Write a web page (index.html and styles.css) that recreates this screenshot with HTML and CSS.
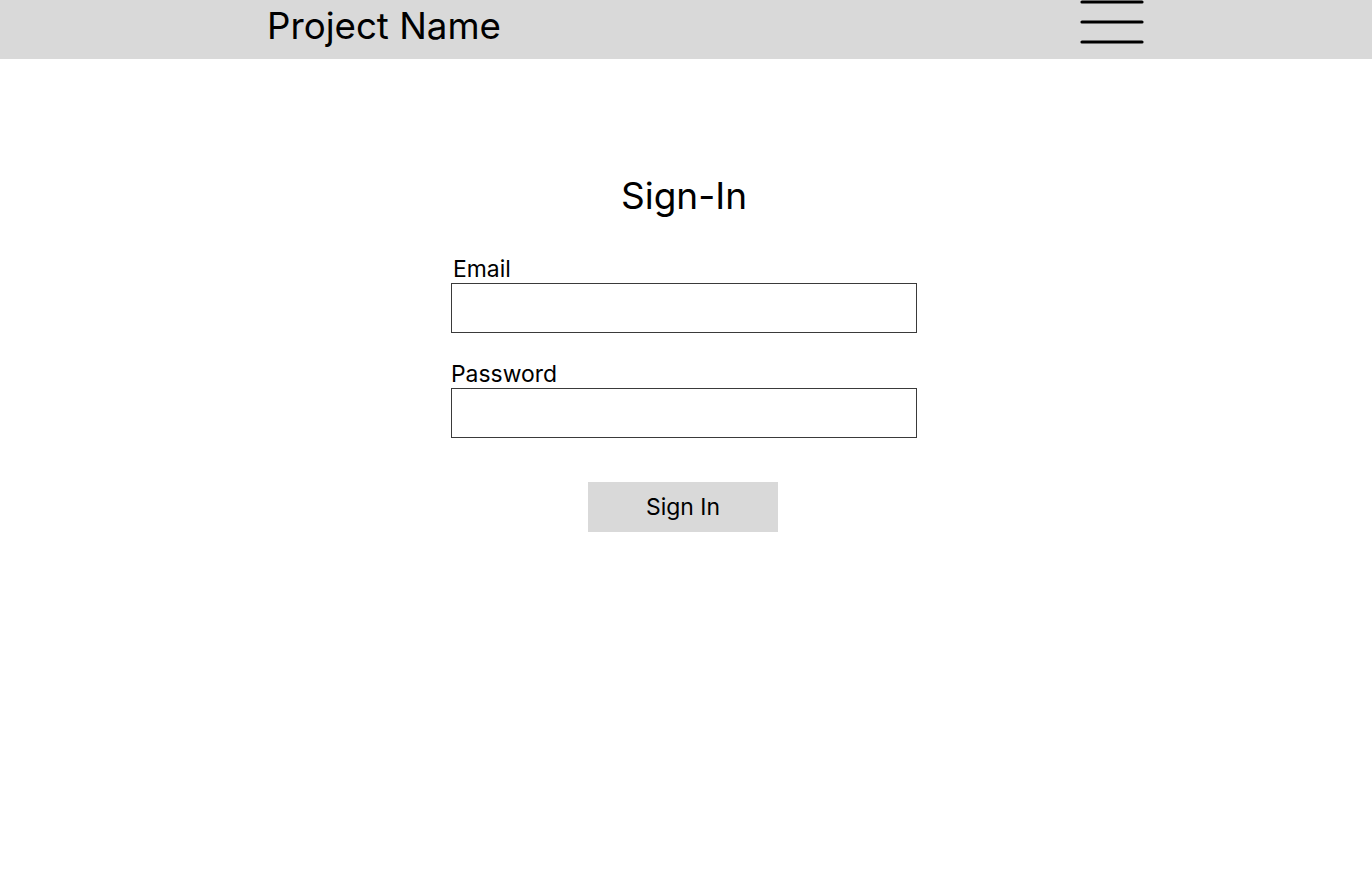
FILE: index.html
```html
<!DOCTYPE html>
<html lang="en">
<head>
<meta charset="utf-8">
<title>Sign-In</title>
<link rel="stylesheet" href="styles.css">
</head>
<body>
<header class="topbar">
  <div class="brand">Project Name</div>
  <button class="menu" aria-label="Menu">
    <svg width="66" height="48" viewBox="0 0 66 48">
      <path d="M3 2H63M3 22H63M3 42H63" stroke="#000" stroke-width="3.2" stroke-linecap="round" fill="none"/>
    </svg>
  </button>
</header>
<main class="main">
  <form class="signin">
    <h1 class="title">Sign-In</h1>
    <label class="field">
      <span class="label label-email">Email</span>
      <input class="input" type="email">
    </label>
    <label class="field field-pw">
      <span class="label">Password</span>
      <input class="input" type="password">
    </label>
    <button class="submit" type="button">Sign In</button>
  </form>
</main>
</body>
</html>
```
FILE: styles.css
```css
* { box-sizing: border-box; }
html, body { margin: 0; padding: 0; background: #fff; }
body { font-family: Inter, "Noto Sans", sans-serif; color: #000; }

.topbar {
  height: 59px;
  background: #d9d9d9;
  display: flex;
  align-items: flex-start;
  justify-content: space-between;
  padding: 0 227px 0 267px;
}
.brand {
  font-size: 36.7px;
  line-height: 52px;
  font-weight: 400;
}
.menu {
  border: 0;
  background: none;
  padding: 0;
  margin: 0;
  width: 66px;
  height: 48px;
  display: block;
}
.menu svg { display: block; }

.main {
  display: flex;
  justify-content: center;
  padding-right: 4px;
}
.signin {
  width: 466px;
  display: flex;
  flex-direction: column;
  align-items: stretch;
  padding-top: 115px;
}
.title {
  margin: 0;
  font-size: 37px;
  font-weight: 400;
  line-height: 44px;
  text-align: center;
}
.field {
  display: flex;
  flex-direction: column;
  margin-top: 38px;
}
.field-pw { margin-top: 28px; }
.label {
  font-size: 22.9px;
  line-height: 26px;
  margin-bottom: 1px;
}
.label-email { padding-left: 2px; }
.input {
  width: 466px;
  height: 50px;
  border: 1px solid #3a3a3a;
  margin: 0;
  padding: 0 8px;
  font: inherit;
  background: #fff;
  outline: none;
}
.submit {
  align-self: center;
  margin-top: 44px;
  width: 190px;
  height: 50px;
  border: 0;
  background: #d9d9d9;
  font-family: Inter, "Noto Sans", sans-serif;
  font-size: 22.9px;
  color: #000;
  padding: 0;
  margin-left: -2px;
}
```
